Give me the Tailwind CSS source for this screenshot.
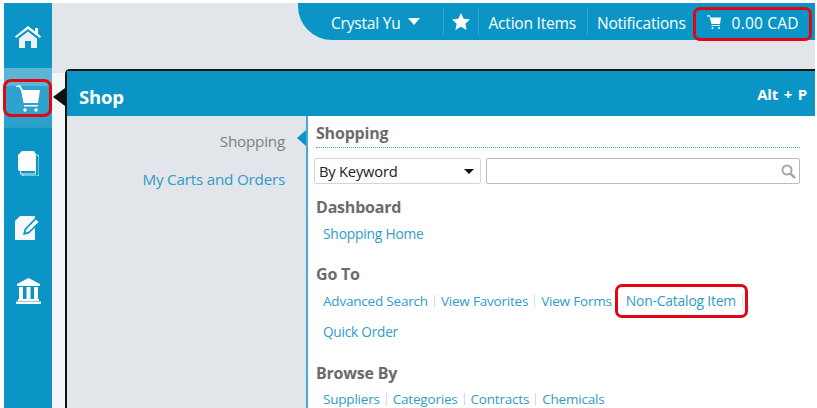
<!DOCTYPE html>
<html><head><meta charset="utf-8"><script src="https://cdn.jsdelivr.net/npm/@tailwindcss/browser@4"></script></head>
<body class="m-0 bg-white">
<div class="relative w-[817px] h-[408px] overflow-hidden flex pt-[3px] pl-[4px] pr-[2px] bg-white font-['Open_Sans','Noto_Sans',sans-serif] text-[15.200px] tracking-[-0.2px]">
  <!-- sidebar -->
  <nav class="w-[48px] shrink-0 h-[405px] bg-[#0a95c6] flex flex-col items-center">
    <div class="h-[65px] w-full flex items-center justify-center pt-[2px]">
      <svg width="26" height="22" viewBox="0 0 26 22"><path d="M13 0 L20 5.500V2h3v6l3 2.500-1 1.500L13 3 1 12 0 10.500Z" fill="#fff"/><path d="M4 12.500 13 5.500l9 7V22h-6v-7h-6v7H4Z" fill="#eef1f3"/></svg>
    </div>
    <div class="h-[60px] w-full bg-[linear-gradient(#5cb4d6_0,#5cb4d6_18px,#2fa2cd_18px,#2fa2cd_48px,#2a9fca_100%)] flex items-center justify-center">
      <svg width="24" height="27" viewBox="0 0 24 27"><path d="M0 1 4 0l3 5h17l-2 13H7.500L5 5 3 2H0Z" fill="#fff"/><path d="M8 20h14v1.500H8Z" fill="#fff"/><circle cx="9" cy="25" r="1.700" fill="#fff"/><circle cx="20" cy="25" r="1.700" fill="#fff"/></svg>
    </div>
    <div class="h-[72px] w-full flex items-center justify-center pb-[1px]">
      <svg width="21" height="25" viewBox="0 0 21 25"><path d="M4 4h15a2 2 0 0 1 2 2v19H6l-2-1Z" fill="#0a95c6" stroke="#dff0f6" stroke-width="1"/><path d="M2.500 2.500h15V23h-15Z" fill="#0a95c6" stroke="#eef6f9" stroke-width="1"/><path d="M4 0h11a2 2 0 0 1 2 2v18H2a2 2 0 0 1-2-2V4Z" fill="#fff"/></svg>
    </div>
    <div class="h-[58px] w-full flex items-center justify-center pb-[2px]">
      <svg width="26" height="26" viewBox="0 0 26 26"><path d="M5 1h15v24H0V6Z" fill="#f4f7f8"/><path d="M8 20l1.500-6L21 2l5 5L14 18.500Z" fill="#0a95c6"/><path d="M10.500 17.500l.8-3L21 4.500l2.500 2.500L13.500 16.700Z" fill="#fff"/></svg>
    </div>
    <div class="h-[65px] w-full flex items-center justify-center">
      <svg width="25" height="26" viewBox="0 0 25 26" fill="#fff"><path d="M12.500 0 24 6v2H1V6Z"/><rect x="3" y="9" width="4" height="12"/><rect x="10.500" y="9" width="4" height="12"/><rect x="18" y="9" width="4" height="12"/><rect x="2" y="21" width="21" height="2"/><rect x="0" y="23.500" width="25" height="2.500"/></svg>
    </div>
  </nav>
  <!-- main -->
  <div class="flex-1 flex flex-col min-w-0 bg-[linear-gradient(#e2e5e9_0,#e2e5e9_70px,#f4f5f7_70px)]">
    <header class="h-[37px] ml-[246px] shrink-0 bg-[#0a95c6] rounded-bl-[34px] text-white text-[15.500px] flex items-center pl-[33px] pt-[4px]">
      <span>Crystal Yu</span>
      <svg class="ml-[7px] mr-[23px] mb-[4px]" width="12" height="7" viewBox="0 0 12 7"><path d="M0 0h12L6 7Z" fill="#fff"/></svg>
      <span class="w-px h-[26px] bg-[#3aa7cf] mb-[4px]"></span>
      <svg class="mx-[8px] mb-[4px]" width="18" height="17" viewBox="0 0 18 17"><path d="M9 0l2.700 5.800 6.300.7-4.700 4.300L14.600 17 9 13.800 3.400 17l1.300-6.200L0 6.500l6.300-.7Z" fill="#fff"/></svg>
      <span class="w-px h-[26px] bg-[#3aa7cf] mb-[4px]"></span>
      <span class="ml-[10px]">Action Items</span>
      <span class="w-px h-[26px] bg-[#3aa7cf] ml-[11px] mr-[9px] mb-[4px]"></span>
      <span>Notifications</span>
      <svg class="ml-[21px] mr-[11px] mb-[4px]" width="14" height="14" viewBox="0 0 14 14"><path d="M0 .5 2.500 0l1.200 2.500H14l-1 6.500H4.500L2.500 1.500H0Z" fill="#fff"/><path d="M4.500 10H13v1H4.500Z" fill="#fff"/><circle cx="5.500" cy="13" r="1" fill="#fff"/><circle cx="12" cy="13" r="1" fill="#fff"/></svg>
      <span class="tracking-[0.2px]">0.00 CAD</span>
    </header>
    <section class="mt-[29px] ml-[13px] flex-1 flex flex-col border-l-2 border-t-2 border-[#111] rounded-tl-[5px] min-h-0">
      <div class="h-[45px] shrink-0 bg-[#0a95c6] text-white font-bold flex items-center justify-between pl-[12px] pr-[8px]">
        <span class="text-[18.500px] mt-[7px]">Shop</span>
        <span class="text-[15px] mt-[1px] [word-spacing:2px]">Alt + P</span>
      </div>
      <div class="flex-1 flex min-h-0">
        <aside class="w-[239px] shrink-0 bg-[#e2e5e9] text-right pr-[21px] pt-[15px] relative">
          <div class="text-[#7d7f83] h-[21px] leading-[21px]">Shopping</div>
          <div class="text-[#2f9cc6] mt-[17px] leading-[21px]">My Carts and Orders</div>
          <div class="absolute right-0 top-[14px] w-0 h-0 border-y-[8px] border-y-transparent border-r-[9px] border-r-[#0a95c6]"></div>
        </aside>
        <div class="flex-1 bg-white border-l-2 border-[#4aa9d2] pl-[6px] pr-[15px] pt-[7px] text-[#2f9cc6] text-[13.500px]">
          <h2 class="font-bold text-[16px] text-[#6b6b6e] leading-[20px] pl-[2px]">Shopping</h2>
          <div class="border-b border-dotted border-[#4aa9c9] mt-[4px] ml-[2px]"></div>
          <div class="flex gap-[5px] mt-[10px] h-[26px]">
            <div class="w-[167px] border border-[#d3d5d8] rounded-[2px] text-[#222] text-[14.700px] flex items-center justify-between pl-[4px] pr-[6px]">
              <span class="mt-[1px]">By Keyword</span>
              <svg width="10" height="5" viewBox="0 0 10 5"><path d="M0 0h10L5 5Z" fill="#111"/></svg>
            </div>
            <div class="flex-1 border border-[#b9bbbd] rounded-[2px] flex items-center justify-end pr-[3px]">
              <svg width="15" height="15" viewBox="0 0 15 15" fill="none" stroke="#a5a8aa" stroke-width="2"><circle cx="6" cy="6" r="4.500"/><path d="M9.500 9.500 14 14" stroke-width="2.500"/></svg>
            </div>
          </div>
          <h3 class="font-bold text-[16px] text-[#6b6b6e] leading-[20px] mt-[13px] pl-[2px]">Dashboard</h3>
          <div class="pl-[9px] mt-[7px] leading-[20px] text-[13.800px]">Shopping Home</div>
          <h3 class="font-bold text-[16px] text-[#6b6b6e] leading-[20px] mt-[20px] pl-[2px]">Go To</h3>
          <div class="pl-[9px] mt-[7px] leading-[20px] flex items-center whitespace-nowrap">
            <span>Advanced Search</span><span class="w-px h-[12px] bg-[#d8dadc] mx-[6px]"></span><span>View Favorites</span><span class="w-px h-[12px] bg-[#d8dadc] mx-[6px]"></span><span>View Forms</span><span class="ml-[14px] text-[13.900px]">Non-Catalog Item</span><span class="w-px h-[12px] bg-[#d8dadc] ml-[6px]"></span>
          </div>
          <div class="pl-[9px] mt-[11px] leading-[20px] text-[13.600px]">Quick Order</div>
          <h3 class="font-bold text-[16px] text-[#6b6b6e] leading-[20px] mt-[21px] pl-[2px]">Browse By</h3>
          <div class="pl-[9px] mt-[6px] leading-[20px] flex items-center whitespace-nowrap">
            <span>Suppliers</span><span class="w-px h-[12px] bg-[#d8dadc] mx-[6px]"></span><span>Categories</span><span class="w-px h-[12px] bg-[#d8dadc] mx-[6px]"></span><span>Contracts</span><span class="w-px h-[12px] bg-[#d8dadc] mx-[6px]"></span><span>Chemicals</span>
          </div>
        </div>
      </div>
    </section>
  </div>
  <!-- overlays -->
  <div class="absolute left-[53px] top-[88px] w-0 h-0 border-y-[9px] border-y-transparent border-r-[12px] border-r-[#111]"></div>
  <div class="absolute left-[3px] top-[79px] w-[49px] h-[38px] border-[3px] border-[#e00612] rounded-[8px]"></div>
  <div class="absolute left-[693px] top-[7px] w-[119px] h-[34px] border-[3px] border-[#e00612] rounded-[7px]"></div>
  <div class="absolute left-[615px] top-[284px] w-[133px] h-[34px] border-[3px] border-[#e00612] rounded-[7px]"></div>
</div>
</body></html>
